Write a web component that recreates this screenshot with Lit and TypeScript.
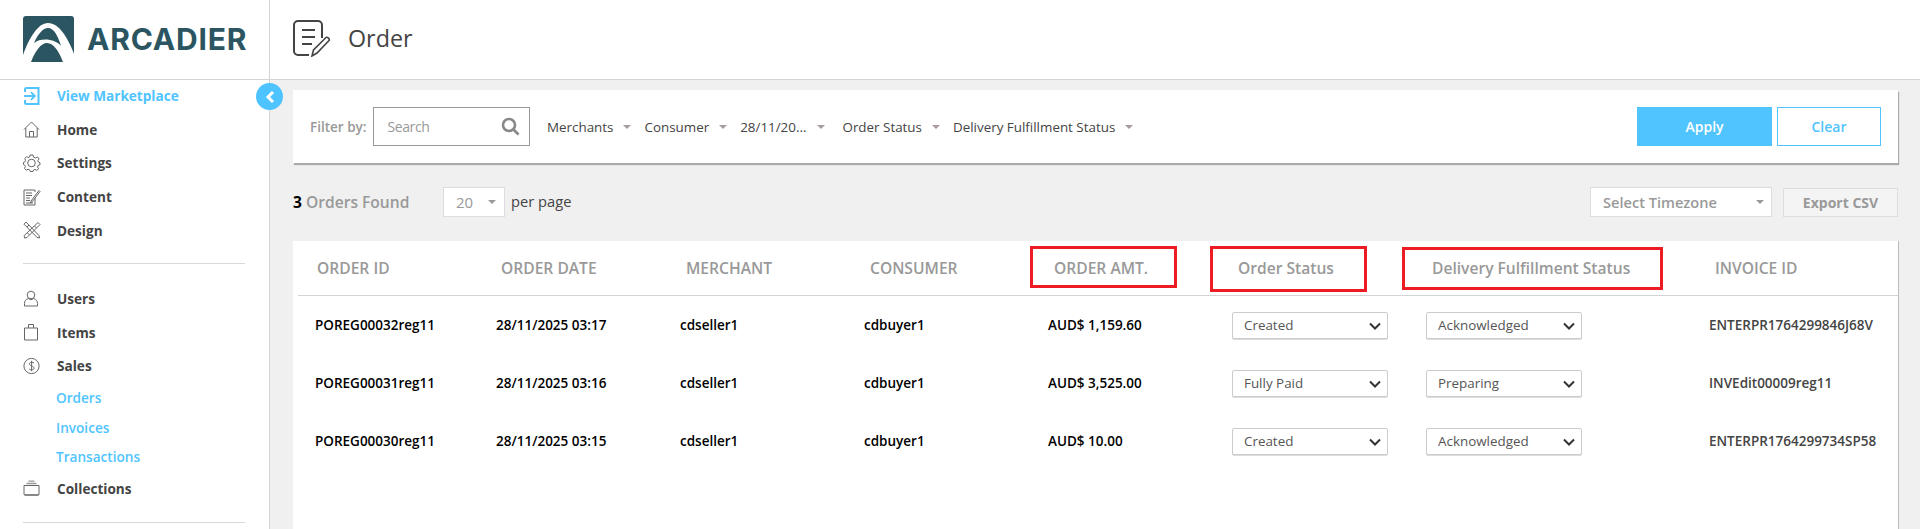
import { LitElement, html, css, svg } from 'lit';
import { customElement } from 'lit/decorators.js';

const ICONS: Record<string, unknown> = {
  enter: svg`<path d="M2 5V2.5A1.5 1.5 0 0 1 3.5 1H15.5V17H3.5A1.5 1.5 0 0 1 2 15.5V13" stroke-width="2"/><path d="M1 9H11.5M8 5.2 11.8 9 8 12.8" stroke-width="1.8"/>`,
  home: svg`<path d="M1 9.5 8.5 2 16 9.5M2.8 8V17H14.2V8M6.5 17V11.5H10.5V17"/>`,
  gear: svg`<circle cx="8.5" cy="9" r="3.8"/><path d="M7 1H10L10.5 3.2 12.5 4 14.4 2.9 16 4.9 14.8 6.7 15.4 8 17 8.8V10.8L15.2 11.4 14.6 13 15.6 14.8 13.8 16.4 12 15.4 10.6 16 10 17.5H7.2L6.6 15.8 5 15.2 3.2 16.2 1.4 14.4 2.4 12.6 1.8 11.2 0.5 10.6V8.4L2 7.6 2.6 6.2 1.8 4.4 3.6 2.6 5.2 3.6 6.6 3Z"/>`,
  content: svg`<path d="M12 4V2H1V17H12V10"/><path d="M3 5H9M3 7.5H9M3 10H7M3 12.5H7M3 15H10"/><path d="M8 13 16 2.5 17 3.5 9.2 13.8 7.6 14.6Z"/>`,
  design: svg`<path d="M3 1 16 14.5 16.5 17 14 16.4 1 3.2ZM15 1.5 17 3.5 4 16.5 1.5 17 1.2 14.6ZM11.5 5 13.5 7M4.5 12 6.5 14M4 6 6 4"/>`,
  user: svg`<circle cx="8" cy="5" r="3.8"/><path d="M5.5 8.5C2.5 9.5 1.5 11 1.5 13.5V16H14.5V13.5C14.5 11 13.5 9.5 10.5 8.5C9.5 10 6.5 10 5.5 8.5Z"/>`,
  bag: svg`<path d="M1.5 5H14.5V17H1.5ZM5.5 5V1.5H10.5V5"/>`,
  dollar: svg`<circle cx="8.5" cy="9" r="7.6"/><path d="M11 6.2C10.5 5 7 4.6 6.4 6.6 5.8 9 11 8.6 11 11.2 10.8 13.4 7 13.4 6 11.8M8.6 3.8V14.2"/>`,
  box: svg`<path d="M1 6.5H16V15.5H1Z"/><path d="M1.5 16H15.5" stroke-width="2" stroke="#888"/><path d="M3.5 4.5H13.5" stroke="#999" stroke-width="1.5"/><path d="M5.5 2.2H11.5" stroke="#aaa" stroke-width="1.5"/>`,
};

type NavItem = { label: string; icon?: string; kind?: string };

const NAV_TOP: NavItem[] = [
  { label: 'View Marketplace', icon: 'enter', kind: 'active' },
  { label: 'Home', icon: 'home' },
  { label: 'Settings', icon: 'gear' },
  { label: 'Content', icon: 'content' },
  { label: 'Design', icon: 'design' },
];

const NAV_BOTTOM: NavItem[] = [
  { label: 'Users', icon: 'user' },
  { label: 'Items', icon: 'bag' },
  { label: 'Sales', icon: 'dollar' },
  { label: 'Orders', kind: 'sub' },
  { label: 'Invoices', kind: 'sub' },
  { label: 'Transactions', kind: 'sub' },
  { label: 'Collections', icon: 'box' },
];

const FILTERS = [
  { label: 'Merchants' },
  { label: 'Consumer' },
  { label: '28/11/20...', kind: 'date' },
  { label: 'Order Status' },
  { label: 'Delivery Fulfillment Status' },
];

const COLUMNS = ['ORDER ID', 'ORDER DATE', 'MERCHANT', 'CONSUMER', 'ORDER AMT.', 'Order Status', 'Delivery Fulfillment Status', 'INVOICE ID'];

const ORDERS = [
  { id: 'POREG00032reg11', date: '28/11/2025 03:17', amount: 'AUD$ 1,159.60', status: 'Created', delivery: 'Acknowledged', invoice: 'ENTERPR1764299846J68V' },
  { id: 'POREG00031reg11', date: '28/11/2025 03:16', amount: 'AUD$ 3,525.00', status: 'Fully Paid', delivery: 'Preparing', invoice: 'INVEdit00009reg11' },
  { id: 'POREG00030reg11', date: '28/11/2025 03:15', amount: 'AUD$ 10.00', status: 'Created', delivery: 'Acknowledged', invoice: 'ENTERPR1764299734SP58' },
];

@customElement('app-root')
export class AppRoot extends LitElement {
  static styles = css`
    :host {
      display: block;
      height: 100vh;
      overflow: hidden;
      background: #f0f0f0;
      font-family: 'Open Sans', 'Liberation Sans', sans-serif;
      font-size: 13.4px;
      color: #444;
    }

    * {
      box-sizing: border-box;
    }

    .topbar {
      display: flex;
      height: 80px;
      background: #fff;
      border-bottom: 1px solid #d4d4d4;
    }

    .brand {
      display: flex;
      align-items: center;
      gap: 13px;
      width: 270px;
      padding: 0 0 2px 23px;
      border-right: 1px solid #d4d4d4;
    }

    .brand svg {
      flex: none;
    }

    .brand-name {
      font-family: 'Inter', 'Liberation Sans', sans-serif;
      font-size: 30px;
      font-weight: 700;
      letter-spacing: 0.8px;
      color: #2c5562;
    }

    .page-title {
      display: flex;
      align-items: center;
      gap: 17px;
      padding: 0 0 3px 23px;
      font-size: 23.3px;
      color: #444;
    }

    .body {
      display: flex;
      height: 449px;
    }

    .sidebar {
      position: relative;
      flex: none;
      width: 270px;
      background: #fff;
      border-right: 1px solid #d4d4d4;
    }

    .nav {
      margin-top: -1px;
      padding: 0 24px 0 23px;
    }

    .nav-group {
      padding-bottom: 16.5px;
      border-bottom: 1px solid #d9d9d9;
      margin-bottom: 17.5px;
    }

    .nav-item {
      display: flex;
      align-items: center;
      height: 33.6px;
      font-weight: 700;
      font-size: 13.6px;
      color: #444;
    }

    .nav-item svg {
      flex: none;
      width: 18px;
      height: 18px;
      margin-right: 16px;
      fill: none;
      stroke: #666;
      stroke-width: 1;
    }

    .nav-item.active {
      color: #50c4ff;
    }

    .nav-item.active svg {
      stroke: #50c4ff;
    }

    .nav-item.sub {
      height: 29.6px;
      padding-left: 33px;
      font-weight: 600;
      color: #50c4ff;
    }

    .toggle {
      position: absolute;
      top: 3px;
      right: -14px;
      display: flex;
      align-items: center;
      justify-content: center;
      width: 27px;
      height: 27px;
      border-radius: 50%;
      background: #4dc3ff;
      z-index: 2;
    }

    .main {
      flex: 1;
      min-width: 0;
      padding: 10px 22px 0 23px;
    }

    .filter-card {
      display: flex;
      align-items: center;
      height: 73px;
      padding: 0 17px 0 17px;
      background: #fff;
      box-shadow: 1px 2px 1px #aaa;
    }

    .filter-label {
      color: #999;
      font-weight: 600;
      font-size: 13.5px;
      margin-right: 6.5px;
    }

    .search {
      display: flex;
      align-items: center;
      justify-content: space-between;
      width: 157px;
      height: 39px;
      padding: 0 9px 0 13.5px;
      border: 1px solid #999;
      color: #999;
      font-size: 14px;
      letter-spacing: -0.4px;
      margin-right: 17px;
    }

    .filter {
      display: flex;
      align-items: center;
      margin-right: 13px;
      color: #444;
      white-space: nowrap;
    }

    .filter.date {
      margin-right: 17px;
    }

    .filter.date .caret {
      margin-left: 11px;
    }

    .caret {
      width: 0;
      height: 0;
      margin-left: 10px;
      border-left: 4px solid transparent;
      border-right: 4px solid transparent;
      border-top: 4px solid #a79ca3;
    }

    .filter-actions {
      display: flex;
      gap: 5px;
      margin-left: auto;
    }

    .btn {
      display: flex;
      align-items: center;
      justify-content: center;
      height: 39px;
      font-weight: 600;
      font-size: 14px;
    }

    .btn.apply {
      width: 135px;
      background: #50c4ff;
      color: #fff;
    }

    .btn.clear {
      width: 104px;
      background: #fff;
      border: 1px solid #50c4ff;
      color: #50c4ff;
    }

    .toolbar {
      display: flex;
      align-items: center;
      height: 30px;
      margin-top: 24px;
    }

    .found {
      width: 150px;
      font-size: 15.6px;
      font-weight: 600;
      color: #999;
    }

    .found b {
      color: #000;
      font-weight: 700;
    }

    .page-size {
      display: flex;
      align-items: center;
      justify-content: space-between;
      width: 62px;
      height: 30px;
      padding: 0 8px 0 12px;
      margin-right: 6px;
      background: #fff;
      border: 1px solid #ddd;
      font-size: 15px;
      color: #999;
    }

    .page-size .caret,
    .timezone .caret {
      margin-left: 0;
      border-top-color: #999;
    }

    .per-page {
      font-size: 14.7px;
      color: #444;
      padding-bottom: 3px;
    }

    .timezone {
      display: flex;
      align-items: center;
      justify-content: space-between;
      width: 182px;
      height: 30px;
      margin-left: auto;
      padding: 0 7px 0 12px;
      background: #fff;
      border: 1px solid #ddd;
      font-size: 14.6px;
      font-weight: 600;
      color: #999;
    }

    .export {
      display: flex;
      align-items: center;
      justify-content: center;
      width: 115px;
      height: 29px;
      margin-left: 11px;
      background: #f4f4f4;
      border: 1px solid #ddd;
      font-size: 14px;
      font-weight: 700;
      color: #999;
    }

    .table-card {
      position: relative;
      height: 300px;
      margin-top: 24px;
      background: #fff;
      box-shadow: 1px 0 0 #bbb;
    }

    .table-head,
    .table-row {
      display: grid;
      align-items: center;
    }

    .table-head {
      grid-template-columns: 184px 185px 184px 184px 184px 194px 283px 1fr;
      height: 55px;
      margin-left: 5px;
      padding-left: 19px;
      border-bottom: 1px solid #d4d4d4;
      font-size: 15.6px;
      font-weight: 600;
      color: #999;
      white-space: nowrap;
    }

    .table-row {
      grid-template-columns: 181px 184px 184px 184px 184px 194px 283px 1fr;
      height: 58px;
      padding-left: 22px;
      font-size: 13.5px;
      font-weight: 600;
      color: #000;
      white-space: nowrap;
    }

    .select-wrap {
      position: relative;
      width: 156px;
      height: 27px;
    }

    .select-wrap select {
      display: block;
      width: 100%;
      height: 100%;
      padding: 0 0 0 11px;
      appearance: none;
      background: #fff;
      border: 1px solid #ccc;
      border-radius: 2px;
      box-shadow: 0 1px 0 #ddd;
      font-family: inherit;
      font-size: 13.4px;
      color: #555;
    }

    .select-wrap svg {
      position: absolute;
      top: 10px;
      right: 7px;
      pointer-events: none;
    }

    .invoice {
      color: #444;
    }

    .mark {
      position: absolute;
      border: 3px solid #ed1c24;
      pointer-events: none;
    }

    .mark.amt {
      left: 737px;
      top: 5px;
      width: 147px;
      height: 42px;
    }

    .mark.status {
      left: 917px;
      top: 5px;
      width: 157px;
      height: 46px;
    }

    .mark.delivery {
      left: 1109px;
      top: 6px;
      width: 261px;
      height: 43px;
    }
  `;

  private renderNavItem(item: NavItem) {
    return html`
      <div class="nav-item ${item.kind ?? ''}">
        ${item.icon ? html`<svg viewBox="0 0 18 18">${ICONS[item.icon]}</svg>` : ''}
        ${item.label}
      </div>
    `;
  }

  private renderLogo() {
    return html`
      <svg width="51" height="46" viewBox="0 0 51 46">
        <rect width="51" height="42" rx="3" fill="#2c5562" />
        <path d="M0 36H51V46H0Z" fill="#2c5562" />
        <path d="M0 46V39C6 22 15 7 25 7C36 7 45 22 51 38V46Z" fill="#fff" />
        <path d="M11 27C15 18 20 12 25 12C31 12 35 20 38 30C33 23 18 21 11 27Z" fill="#2c5562" />
        <path d="M8 46C12 35 18 27 24 27C31 27 36 36 40 46Z" fill="#2c5562" />
      </svg>
    `;
  }

  private renderTitleIcon() {
    return html`
      <svg width="38" height="38" viewBox="0 0 38 38" fill="none" stroke="#444" stroke-width="2">
        <path d="M29 19V6A4 4 0 0 0 25 2H5A4 4 0 0 0 1 6V32A4 4 0 0 0 5 36H16" />
        <path d="M9 11H22M9 18H22M9 25H19" />
        <path d="M19 37 20.5 31 33 18.5C34.5 17.5 37 20 36 21.5L24 34Z" stroke-width="1.6" />
      </svg>
    `;
  }

  private renderSelect(value: string) {
    return html`
      <div class="select-wrap">
        <select><option>${value}</option></select>
        <svg width="12" height="8" viewBox="0 0 12 8" fill="none" stroke="#333" stroke-width="2">
          <path d="M1 1.5 6 6.5 11 1.5" />
        </svg>
      </div>
    `;
  }

  render() {
    return html`
      <div class="topbar">
        <div class="brand">
          ${this.renderLogo()}
          <span class="brand-name">ARCADIER</span>
        </div>
        <div class="page-title">
          ${this.renderTitleIcon()}
          <span>Order</span>
        </div>
      </div>
      <div class="body">
        <aside class="sidebar">
          <div class="toggle">
            <svg width="12" height="14" viewBox="0 0 12 14" fill="none" stroke="#fff" stroke-width="3">
              <path d="M9 2 4 7 9 12" />
            </svg>
          </div>
          <nav class="nav">
            <div class="nav-group">${NAV_TOP.map((item) => this.renderNavItem(item))}</div>
            <div class="nav-group">${NAV_BOTTOM.map((item) => this.renderNavItem(item))}</div>
          </nav>
        </aside>
        <main class="main">
          <section class="filter-card">
            <span class="filter-label">Filter by:</span>
            <div class="search">
              <span>Search</span>
              <svg width="19" height="19" viewBox="0 0 19 19" fill="none" stroke="#888" stroke-width="2.6">
                <circle cx="8" cy="8" r="6" />
                <path d="M12 12 17.5 17.5" />
              </svg>
            </div>
            ${FILTERS.map(
              (filter) => html`<div class="filter ${filter.kind ?? ''}">${filter.label}<span class="caret"></span></div>`
            )}
            <div class="filter-actions">
              <div class="btn apply">Apply</div>
              <div class="btn clear">Clear</div>
            </div>
          </section>
          <div class="toolbar">
            <div class="found"><b>3</b> Orders Found</div>
            <div class="page-size">20<span class="caret"></span></div>
            <div class="per-page">per page</div>
            <div class="timezone">Select Timezone<span class="caret"></span></div>
            <div class="export">Export CSV</div>
          </div>
          <section class="table-card">
            <div class="table-head">${COLUMNS.map((col) => html`<div>${col}</div>`)}</div>
            <div class="table-body">
              ${ORDERS.map(
                (order) => html`
                  <div class="table-row">
                    <div>${order.id}</div>
                    <div>${order.date}</div>
                    <div>cdseller1</div>
                    <div>cdbuyer1</div>
                    <div>${order.amount}</div>
                    <div>${this.renderSelect(order.status)}</div>
                    <div>${this.renderSelect(order.delivery)}</div>
                    <div class="invoice">${order.invoice}</div>
                  </div>
                `
              )}
            </div>
            <div class="mark amt"></div>
            <div class="mark status"></div>
            <div class="mark delivery"></div>
          </section>
        </main>
      </div>
    `;
  }
}
